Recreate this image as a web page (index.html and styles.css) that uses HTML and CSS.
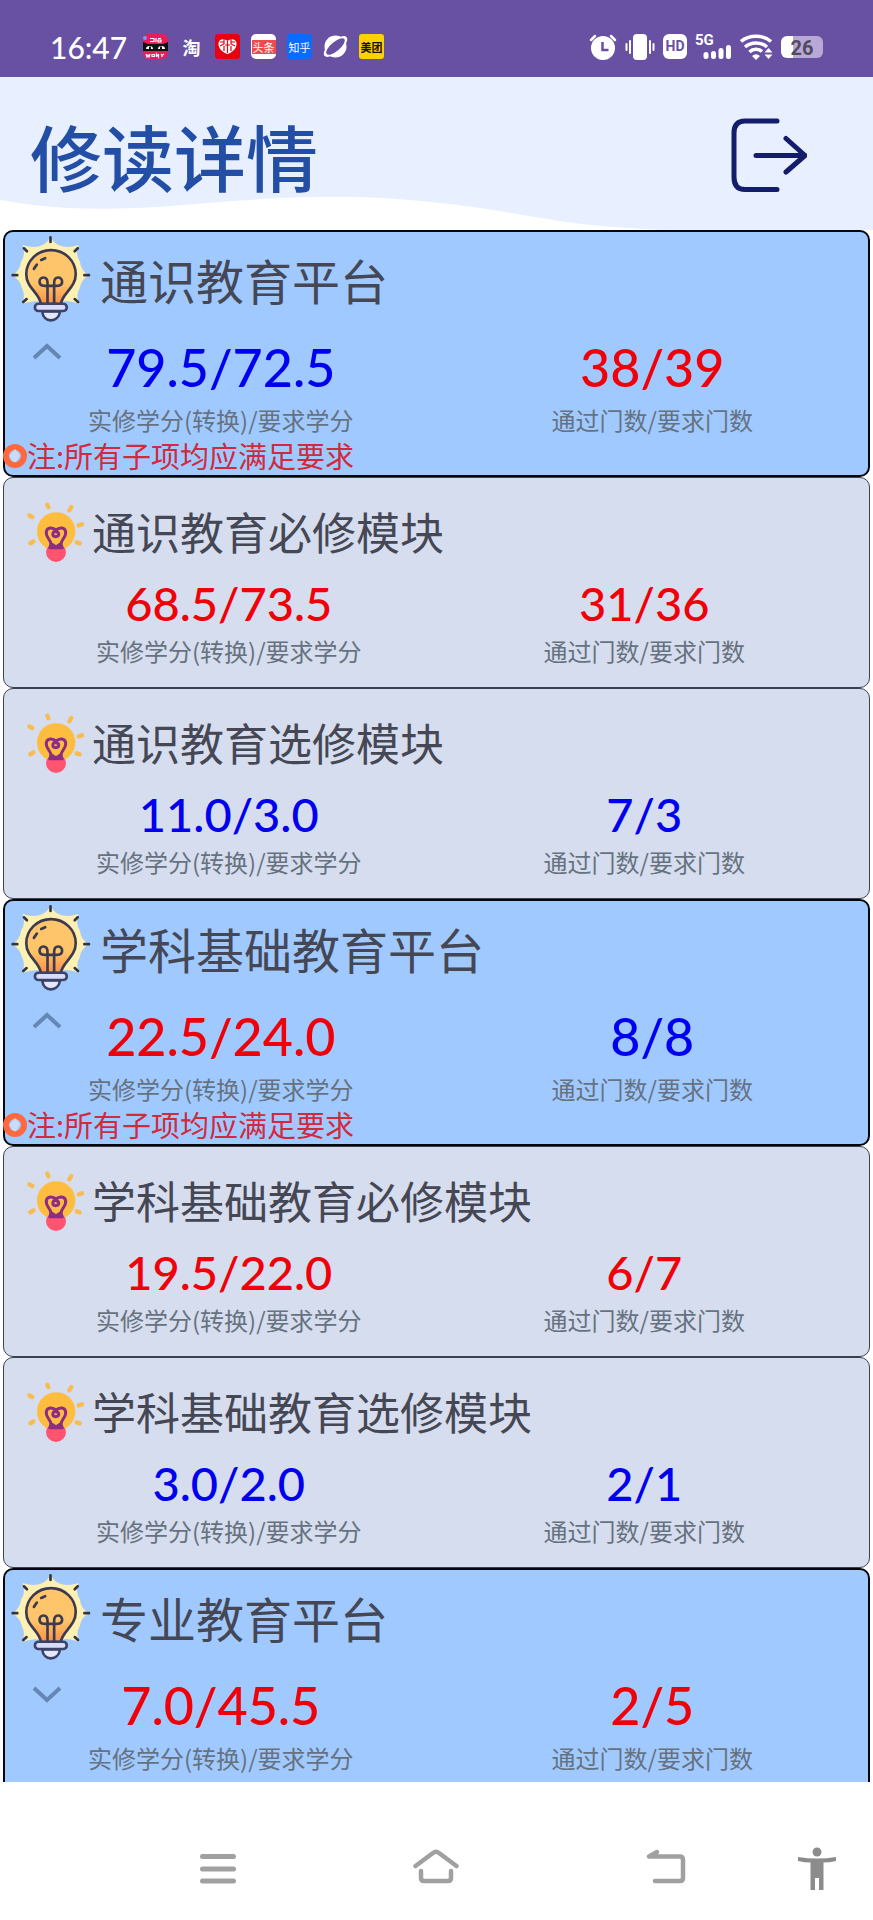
FILE: index.html
```html
<!DOCTYPE html>
<html lang="zh-CN">
<head>
<meta charset="utf-8">
<meta name="viewport" content="width=device-width, initial-scale=1">
<title>修读详情</title>
<link rel="stylesheet" href="styles.css">
</head>
<body>
<svg class="sprite" aria-hidden="true">
  <linearGradient id="glow" x1="0" y1="0" x2="0" y2="1">
    <stop offset="0.6" stop-color="#ffc56b"/><stop offset="1" stop-color="#fa9044"/>
  </linearGradient>
  <symbol id="bulb" viewBox="30 28 244 266">
    <path fill="#fdf0b2" d="M152 34Q162 56 176 60Q200 72 236 60Q226 90 240 108Q244 138 268 151Q244 164 240 190Q226 212 240 238Q205 226 190 230H115Q98 228 66 238Q78 212 66 190Q62 166 36 151Q60 138 64 108Q78 90 68 60Q104 72 128 60Q142 56 152 34Z"/>
    <g fill="none" stroke="#35353f" stroke-width="8" stroke-linecap="round">
      <path d="M152 37v14M72 70l9 9M234 70l-9 9M38 151h14M254 151h14M70 232l10-9M235 232l-10-9"/>
    </g>
    <path fill="url(#glow)" stroke="#3c3a4e" stroke-width="8" d="M123 238C120 205 79 190 79 148A74 72 0 0 1 228 148C228 190 187 205 183 238Z"/>
    <g fill="none" stroke="#3c3a4e" stroke-width="8" stroke-linecap="round">
      <path d="M102 132l9-13M124 105l12-5"/>
      <path d="M143 236V174C143 152 118 154 119 171C120 184 132 184 143 183H163C174 184 187 184 187 171C187 154 163 152 163 174V236"/>
    </g>
    <path fill="#e6e8fb" stroke="#3b4368" stroke-width="8" d="M127 260C129 278 140 287 153 287S178 278 181 260Z"/>
    <rect x="105" y="237" width="96" height="22" rx="11" fill="#d8dcf8" stroke="#3b4368" stroke-width="8"/>
  </symbol>
  <symbol id="idea" viewBox="33 30 180 186">
    <circle cx="123" cy="183" r="30" fill="#ff5470"/>
    <path fill="#ffbd3f" d="M66 121a57 57 0 1 1 115 0c0 20-10 38-26 49H93c-17-10-27-28-27-49Z"/>
    <g stroke="#f8bc52" stroke-width="13" stroke-linecap="round">
      <path d="M97 41l3 8M169 48l-6 10M43 73l9 5M201 100l-10 3M55 151l-9 6M185 154l9 3"/>
    </g>
    <g fill="none" stroke="#8c2d83" stroke-width="9" stroke-linecap="round" stroke-linejoin="round">
      <path d="M104 170C117 150 90 141 94 122C96 108 114 108 123 118C132 108 150 108 152 122C155 141 129 151 142 170Z"/>
      <path d="M123 118C111 123 110 136 122 137C134 137 134 122 124 123"/>
      <path d="M111 160L123 168L135 160"/>
    </g>
  </symbol>
  <symbol id="ring" viewBox="0 0 24 24">
    <circle cx="12" cy="12" r="9" fill="none" stroke="#ff693d" stroke-width="6"/>
    <path fill="#c9dcfa" d="M12 5L17 11L14 17L12 18.500L9 17L6.500 11.500Z"/>
  </symbol>
  <symbol id="up" viewBox="0 0 56 56"><path fill="none" stroke="currentColor" stroke-width="4" d="M15 32L28 20L41 32"/></symbol>
  <symbol id="down" viewBox="0 0 56 56"><path fill="none" stroke="currentColor" stroke-width="4" d="M15 24L28 36L41 24"/></symbol>
</svg>

<div class="status">
  <div class="status-left">
    <time class="clock">16:47</time>
    <svg class="app" viewBox="0 0 25 25" aria-hidden="true">
      <rect width="25" height="25" rx="6" fill="#ec1c5b"/>
      <path fill="#111" d="M0 8L5 10H20L25 8V17H0Z"/>
      <path fill="#fff" d="M3 15a3.500 3 0 0 1 7 0zM15 15a3.500 3 0 0 1 7 0z"/>
      <path fill="#111" d="M6 12.500h2V15H6zM17 12.500h2V15h-2z"/>
      <path fill="none" stroke="#fff" stroke-width="1.200" d="M7 4.500h4v3H7M13 4v4M15 4.500h3M15 8h3V6h-3zM3 20l1 3 1-2 1 2 1-3M9 20.500h2.500v2H9zM13.500 23v-3l2 3v-3M18 20l1 1.500 2-1.500M19 21v2"/>
      <circle cx="2" cy="4" r="2" fill="#6fa1ec"/>
    </svg>
    <span class="app app-tao">淘</span>
    <svg class="app" viewBox="0 0 25 25" aria-hidden="true">
      <rect width="25" height="25" rx="3" fill="#e60012"/>
      <path fill="#fff" d="M12.500 20C7 18 3 14 3.500 9C4 5 9 4 12.500 7C16 4 21 5 21.500 9C22 14 18 18 12.500 20Z"/>
      <path fill="none" stroke="#e60012" stroke-width="1.200" d="M12.500 7v12M9 5v5l-4 2M16 5v5l4 2M5 8h4M16 8h4M9 12v5M16 12v5M10 11h5"/>
    </svg>
    <span class="app app-toutiao"><span>头条</span></span>
    <span class="app app-zhihu">知乎</span>
    <svg class="app" viewBox="0 0 25 25" aria-hidden="true">
      <circle cx="12.500" cy="12.500" r="11" fill="#fff"/>
      <ellipse cx="12.500" cy="12.500" rx="14.500" ry="6" transform="rotate(-40 12.500 12.500)" fill="#fff"/>
      <ellipse cx="12.500" cy="12.500" rx="11.500" ry="4.500" transform="rotate(-40 12.500 12.500)" fill="#6850a3"/>
    </svg>
    <span class="app app-meituan">美团</span>
  </div>
  <div class="status-right">
    <svg width="28" height="26" viewBox="0 0 28 26" aria-hidden="true">
      <circle cx="14" cy="14" r="12" fill="#fff"/>
      <path fill="none" stroke="#fff" stroke-width="2.500" stroke-linecap="round" d="M2 6L6 2M26 6L22 2"/>
      <path fill="none" stroke="#6850a3" stroke-width="2.500" d="M13.500 8v8h6"/>
    </svg>
    <svg width="30" height="26" viewBox="0 0 30 26" aria-hidden="true">
      <rect x="8" y="0" width="14" height="26" rx="4" fill="#fff"/>
      <path stroke="#fff" stroke-width="2" stroke-linecap="round" d="M1.500 10v6M5 7v12M25 7v12M28.500 10v6"/>
    </svg>
    <span class="hd">HD</span>
    <span class="signal">
      <span class="net">5G</span>
      <svg width="29" height="14" viewBox="0 0 29 14" aria-hidden="true"><path stroke="#fff" stroke-width="5" stroke-linecap="round" d="M3 9.500v2M10.500 8.500v3M18 5.500v6M25.500 2.500v9"/></svg>
    </span>
    <svg width="33" height="26" viewBox="0 0 33 26" aria-hidden="true">
      <path fill="none" stroke="#fff" stroke-width="3.500" d="M1 7.500C9 .500 23 .500 31 7.500M5 13C11 7.500 21 7.500 27 13M9.500 18C13 14.500 19 14.500 22 17.500"/>
      <path fill="#fff" d="M12 22q4-3.500 8 0l-4 4zM24.500 18.500L28.500 14l4 4.500zM24.500 20.500h8L28.500 25z"/>
    </svg>
    <span class="battery">26</span>
  </div>
</div>

<header class="top">
  <svg class="wave" viewBox="0 0 873 153" preserveAspectRatio="none" aria-hidden="true">
    <path fill="#fff" d="M0 123C50 132 100 134 170 129C240 123 290 119 360 120C450 123 520 138 560 144C600 150 630 151 660 153H0Z"/>
  </svg>
  <h1>修读详情</h1>
  <button class="exit" type="button" aria-label="退出">
    <svg width="76" height="76" viewBox="0 0 76 76" aria-hidden="true">
      <path fill="none" stroke="#141d6c" stroke-width="5" stroke-linecap="round" stroke-linejoin="round" d="M46 4H14Q3 4 3 16V60Q3 72.500 14 72.500H46M25 38.500H74M55 21.500L74 38.500L55 55"/>
    </svg>
  </button>
</header>

<main class="list">
  <section class="card platform">
    <div class="head"><svg class="bulb" aria-hidden="true"><use href="#bulb"/></svg><h2>通识教育平台</h2></div>
    <button class="toggle" type="button" aria-label="收起" aria-expanded="true"><svg><use href="#up"/></svg></button>
    <dl class="stats">
      <div><dd class="ok">79.5/72.5</dd><dt>实修学分(转换)/要求学分</dt></div>
      <div><dd class="bad">38/39</dd><dt>通过门数/要求门数</dt></div>
    </dl>
    <p class="note"><svg aria-hidden="true"><use href="#ring"/></svg>注:所有子项均应满足要求</p>
  </section>
  <section class="card module">
    <div class="head"><svg class="idea" aria-hidden="true"><use href="#idea"/></svg><h3>通识教育必修模块</h3></div>
    <dl class="stats">
      <div><dd class="bad">68.5/73.5</dd><dt>实修学分(转换)/要求学分</dt></div>
      <div><dd class="bad">31/36</dd><dt>通过门数/要求门数</dt></div>
    </dl>
  </section>
  <section class="card module">
    <div class="head"><svg class="idea" aria-hidden="true"><use href="#idea"/></svg><h3>通识教育选修模块</h3></div>
    <dl class="stats">
      <div><dd class="ok">11.0/3.0</dd><dt>实修学分(转换)/要求学分</dt></div>
      <div><dd class="ok">7/3</dd><dt>通过门数/要求门数</dt></div>
    </dl>
  </section>

  <section class="card platform">
    <div class="head"><svg class="bulb" aria-hidden="true"><use href="#bulb"/></svg><h2>学科基础教育平台</h2></div>
    <button class="toggle" type="button" aria-label="收起" aria-expanded="true"><svg><use href="#up"/></svg></button>
    <dl class="stats">
      <div><dd class="bad">22.5/24.0</dd><dt>实修学分(转换)/要求学分</dt></div>
      <div><dd class="ok">8/8</dd><dt>通过门数/要求门数</dt></div>
    </dl>
    <p class="note"><svg aria-hidden="true"><use href="#ring"/></svg>注:所有子项均应满足要求</p>
  </section>
  <section class="card module">
    <div class="head"><svg class="idea" aria-hidden="true"><use href="#idea"/></svg><h3>学科基础教育必修模块</h3></div>
    <dl class="stats">
      <div><dd class="bad">19.5/22.0</dd><dt>实修学分(转换)/要求学分</dt></div>
      <div><dd class="bad">6/7</dd><dt>通过门数/要求门数</dt></div>
    </dl>
  </section>
  <section class="card module">
    <div class="head"><svg class="idea" aria-hidden="true"><use href="#idea"/></svg><h3>学科基础教育选修模块</h3></div>
    <dl class="stats">
      <div><dd class="ok">3.0/2.0</dd><dt>实修学分(转换)/要求学分</dt></div>
      <div><dd class="ok">2/1</dd><dt>通过门数/要求门数</dt></div>
    </dl>
  </section>

  <section class="card platform">
    <div class="head"><svg class="bulb" aria-hidden="true"><use href="#bulb"/></svg><h2>专业教育平台</h2></div>
    <button class="toggle" type="button" aria-label="展开" aria-expanded="false"><svg><use href="#down"/></svg></button>
    <dl class="stats">
      <div><dd class="bad">7.0/45.5</dd><dt>实修学分(转换)/要求学分</dt></div>
      <div><dd class="bad">2/5</dd><dt>通过门数/要求门数</dt></div>
    </dl>
  </section>
</main>

<nav class="nav">
  <button type="button" aria-label="最近任务">
    <svg width="46" height="44" viewBox="0 0 46 44" aria-hidden="true"><path stroke="#a0a0a0" stroke-width="5" stroke-linecap="round" d="M7.500 9.500h31M7.500 22h31M7.500 34h31"/></svg>
  </button>
  <button type="button" aria-label="主页">
    <svg width="46" height="44" viewBox="0 0 46 44" aria-hidden="true"><path fill="none" stroke="#a0a0a0" stroke-width="4.500" stroke-linecap="round" stroke-linejoin="round" d="M2.500 19L20 6Q23 3.500 26 6L43.500 19M8 24V31Q8 34 11 34H35Q38 34 38 31V24"/></svg>
  </button>
  <button type="button" aria-label="返回">
    <svg width="46" height="44" viewBox="0 0 46 44" aria-hidden="true"><path fill="none" stroke="#a0a0a0" stroke-width="4.500" stroke-linecap="round" stroke-linejoin="round" d="M12 34H37Q40 34 40 31V13Q40 9.500 37 9.500H6L14 5"/></svg>
  </button>
  <button type="button" aria-label="无障碍">
    <svg width="46" height="44" viewBox="0 0 46 44" aria-hidden="true"><circle cx="23" cy="5" r="4.500" fill="#8c8c8c"/><path fill="#8c8c8c" d="M4 10Q23 13 42 10V14Q35 15.500 29.500 15.500V43H25V31H21V43H16.500V15.500Q11 15.500 4 14Z"/></svg>
  </button>
</nav>
</body>
</html>
```
FILE: styles.css
```css
* {
  box-sizing: border-box;
}

body {
  display: flex;
  flex-direction: column;
  height: 100vh;
  margin: 0;
  background: #fff;
  color: #454754;
  font-family: "Noto Sans CJK SC", sans-serif;
}

h1, h2, h3, p, dl, dd, dt {
  margin: 0;
  font-weight: 400;
}

button {
  padding: 0;
  border: 0;
  background: none;
}

svg {
  display: block;
  flex: none;
}

.sprite {
  position: absolute;
  width: 0;
  height: 0;
}

/* Status bar */

.status {
  display: flex;
  flex: none;
  align-items: center;
  justify-content: space-between;
  height: 77px;
  padding: 16px 50px 0 50px;
  background: #6850a3;
  color: #fff;
}

.status-left,
.status-right {
  display: flex;
  align-items: center;
}

.status-left {
  gap: 11px;
}

.status-right {
  gap: 8px;
}

.clock {
  width: 82px;
  font: 500 30px/36px Lato, sans-serif;
}

.app {
  display: flex;
  align-items: center;
  justify-content: center;
  width: 25px;
  height: 25px;
  border-radius: 3px;
  font-size: 11px;
  line-height: 12px;
  white-space: nowrap;
}

.app-tao {
  font-size: 18px;
  font-weight: 700;
}

.app-toutiao {
  border-radius: 5px;
  background: #fff;
}

.app-toutiao span {
  padding: 1px;
  background: #ea4d4d;
}

.app-zhihu {
  background: #0a6cff;
}

.app-meituan {
  background: #ffd100;
  color: #111;
  font-weight: 700;
}

.hd {
  width: 24px;
  height: 25px;
  border-radius: 6px;
  background: #fff;
  color: #6850a3;
  font: 700 14px/25px Roboto, sans-serif;
  text-align: center;
}

.signal {
  display: flex;
  flex-direction: column;
  align-items: flex-end;
  width: 37px;
  height: 25px;
}

.net {
  align-self: flex-start;
  height: 11px;
  font: 700 15px/13px Roboto, sans-serif;
}

.battery {
  width: 42px;
  height: 22px;
  border-radius: 6px;
  background: linear-gradient(90deg, #fff 28%, #b8a8d6 28%);
  color: #514a60;
  font: 700 20px/24px Roboto, sans-serif;
  text-align: center;
}

/* Page header */

.top {
  position: relative;
  display: flex;
  flex: none;
  align-items: center;
  justify-content: space-between;
  height: 153px;
  padding: 2px 66px 0 30px;
  background: #e8efff;
}

.wave {
  position: absolute;
  inset: 0;
  width: 100%;
  height: 100%;
}

.top h1 {
  position: relative;
  color: #234ea5;
  font-size: 72px;
  font-weight: 500;
  line-height: 88px;
}

.exit {
  position: relative;
}

/* Credit cards */

.list {
  flex: 1;
  min-height: 0;
  padding: 0 3px;
  overflow-y: auto;
  scrollbar-width: none;
}

.card {
  position: relative;
}

.head {
  display: flex;
}

.stats {
  display: grid;
  grid-template-columns: 1fr 1fr;
  text-align: center;
}

.stats > div {
  display: flex;
  flex-direction: column;
}

.stats dd {
  font-family: Lato, sans-serif;
  font-weight: 500;
}

.stats dt {
  order: 1;
  color: #66727f;
  font-size: 24px;
  line-height: 32px;
}

.ok {
  color: #0000f0;
}

.bad {
  color: #f00008;
}

.platform {
  min-height: 247px;
  border: 2px solid #05070f;
  border-radius: 10px;
  background: #a0c9ff;
}

.platform .head {
  gap: 9px;
  height: 98px;
  padding: 2px 5px;
}

.platform h2 {
  font-size: 48px;
  line-height: 90px;
}

.bulb {
  width: 81px;
  height: 89px;
}

.platform dd {
  font-size: 52px;
  line-height: 74px;
}

.toggle {
  position: absolute;
  top: 94px;
  left: 14px;
  color: #6487b4;
}

.toggle svg {
  width: 56px;
  height: 56px;
}

.note {
  display: flex;
  align-items: center;
  margin-left: -2px;
  color: #d02a3c;
  font-size: 29px;
  line-height: 39px;
}

.note svg {
  width: 24px;
  height: 24px;
}

.module {
  padding: 10px 17px 17px;
  border: 1px solid #3a4150;
  border-radius: 10px;
  background: #d6ddee;
}

.module .head {
  align-items: center;
  gap: 6px;
  height: 88px;
  padding-left: 5px;
}

.module h3 {
  padding-bottom: 3px;
  font-size: 44px;
  line-height: 60px;
}

.idea {
  width: 60px;
  height: 62px;
}

.module dd {
  font-size: 47px;
  line-height: 55px;
}

.module .stats dt {
  line-height: 39px;
}

/* System navigation */

.nav {
  display: grid;
  flex: none;
  grid-template-columns: 218fr 218fr 242fr 60fr;
  align-items: center;
  height: 138px;
  padding: 36px 3% 0 12.5%;
}

.nav button {
  display: flex;
  justify-content: center;
}
```
